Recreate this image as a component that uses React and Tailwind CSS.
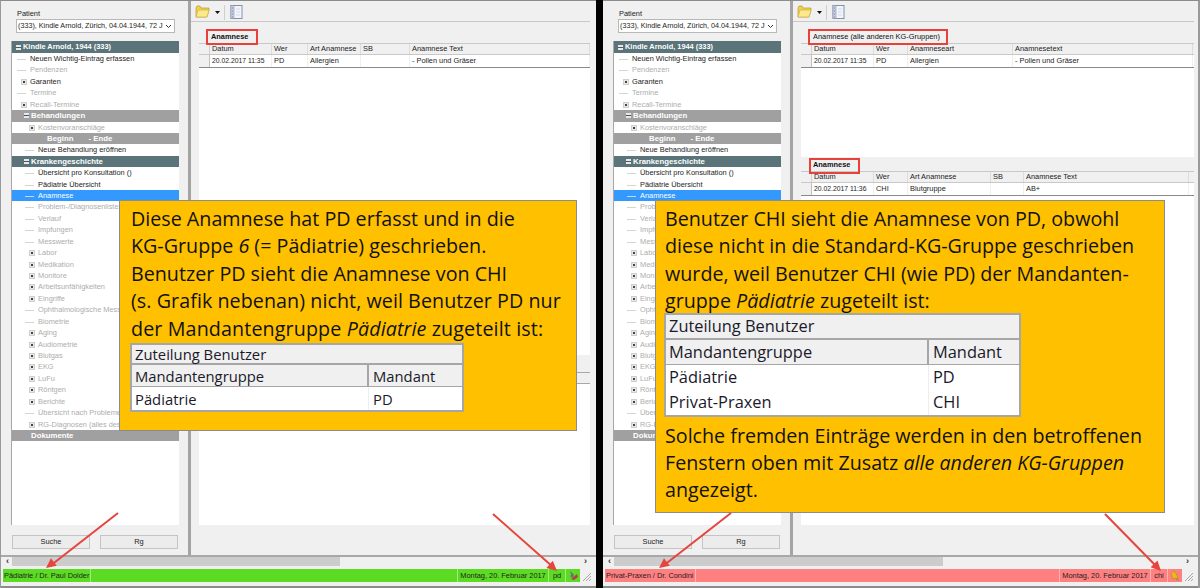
import React from "react";

const treeRows = [
  { label: "Neuen Wichtig-Eintrag erfassen", level: 1 },
  { label: "Pendenzen", level: 1, off: true },
  { label: "Garanten", level: 1, plus: true },
  { label: "Termine", level: 1, off: true },
  { label: "Recall-Termine", level: 1, plus: true, off: true },
  { label: "Behandlungen", head: "gray", box: true },
  { label: "Kostenvoranschläge", level: 2, plus: true, off: true },
  { label: "Beginn       - Ende", head: "gray", sub: true },
  { label: "Neue Behandlung eröffnen", level: 2 },
  { label: "Krankengeschichte", head: "teal", box: true },
  { label: "Übersicht pro Konsultation ()", level: 2 },
  { label: "Pädiatrie Übersicht", level: 2 },
  { label: "Anamnese", level: 2, active: true },
  { label: "Problem-/Diagnosenliste", level: 2, off: true },
  { label: "Verlauf", level: 2, off: true },
  { label: "Impfungen", level: 2, off: true },
  { label: "Messwerte", level: 2, off: true },
  { label: "Labor", level: 2, plus: true, off: true },
  { label: "Medikation", level: 2, plus: true, off: true },
  { label: "Monitore", level: 2, plus: true, off: true },
  { label: "Arbeitsunfähigkeiten", level: 2, plus: true, off: true },
  { label: "Eingriffe", level: 2, plus: true, off: true },
  { label: "Ophthalmologische Messungen", level: 2, off: true },
  { label: "Biometrie", level: 2, off: true },
  { label: "Aging", level: 2, plus: true, off: true },
  { label: "Audiometrie", level: 2, plus: true, off: true },
  { label: "Blutgas", level: 2, plus: true, off: true },
  { label: "EKG", level: 2, plus: true, off: true },
  { label: "LuFu", level: 2, plus: true, off: true },
  { label: "Röntgen", level: 2, plus: true, off: true },
  { label: "Berichte", level: 2, plus: true, off: true },
  { label: "Übersicht nach Problemen", level: 2, off: true },
  { label: "RG-Diagnosen (alles des Patienten)", level: 2, plus: true, off: true },
];

const PlusBox = () => (
  <span className="w-[6px] h-[6px] bg-[#e8e8e8] border border-[#cfcfcf] flex items-center justify-center shrink-0">
    <span className="w-[2px] h-[2px] bg-[#444]" />
  </span>
);

const TreeRow = ({ row }) => {
  if (row.head) {
    return (
      <div
        className={`h-[11.43px] flex items-center text-white font-bold text-[7.8px] whitespace-pre ${
          row.head === "teal" ? "bg-[#5a7479]" : "bg-[#a0a0a0]"
        } ${row.sub ? "pl-[35px]" : "pl-[12px]"}`}
      >
        {row.box && (
          <span className="w-[5px] h-[5px] bg-[#e8e8e8] mr-[2px] flex items-center">
            <span className="w-full h-[1px] bg-[#555]" />
          </span>
        )}
        {row.label}
      </div>
    );
  }
  const textLeft = row.level === 1 ? "pl-[18px]" : "pl-[26px]";
  return (
    <div
      className={`h-[11.43px] flex items-center relative whitespace-nowrap overflow-hidden ${textLeft} ${
        row.active ? "bg-[#3399ff] text-white" : row.off ? "text-[#adadad]" : "text-[#1c1c1c]"
      }`}
    >
      {row.plus ? (
        <span className={`absolute top-[3px] ${row.level === 1 ? "left-[9px]" : "left-[17px]"}`}>
          <PlusBox />
        </span>
      ) : (
        <span
          className={`absolute top-[6px] h-[1px] bg-[#d4d4d4] ${
            row.level === 1 ? "left-[5px] w-[9px]" : "left-[13px] w-[9px]"
          }`}
        />
      )}
      {row.label}
    </div>
  );
};

const GridTitle = ({ title, bold }) => (
  <div className={`h-[12px] bg-[#f0f0f0] flex items-center pl-[12px] text-[#111] ${bold ? "font-bold" : ""}`}>
    {title}
  </div>
);

const Grid = ({ cols, rows }) => (
  <div className="border-b border-[#8a8a8a]">
    <div className="flex h-[12px] bg-[#f0f0f0] border-y border-[#c8c8c8]">
      <div className="w-[11px] border-r border-[#d0d0d0]" />
      {cols.map((c) => (
        <div
          key={c.label}
          style={{ width: c.w }}
          className="flex items-center pl-[2px] text-[#222] border-r border-[#dcdcdc] whitespace-nowrap"
        >
          {c.label}
        </div>
      ))}
    </div>
    {rows.map((r) => (
      <div key={r[0]} className="flex h-[12px]">
        <div className="w-[11px] bg-[#f0f0f0] border-r border-[#c0c0c0]" />
        {cols.map((c, i) => (
          <div
            key={c.label}
            style={{ width: c.w }}
            className={`flex items-center pl-[2px] text-[#222] border-r border-[#f0f0f0] whitespace-nowrap ${
              i === 0 ? "text-[6.8px]" : ""
            }`}
          >
            {r[i]}
          </div>
        ))}
      </div>
    ))}
  </div>
);

const FolderIcon = () => (
  <svg width="15" height="13" viewBox="0 0 15 13" className="shrink-0">
    <path d="M1 3 L1 12 L12 12 L14 5 L14 3 L6 3 L5 1 L2 1 Z" fill="#f2cf4e" stroke="#b99a35" strokeWidth="0.7" />
    <path d="M1 12 L3 5 L14 5 L12 12 Z" fill="#fbe98c" stroke="#c9ab3e" strokeWidth="0.6" />
  </svg>
);

const NotebookIcon = () => (
  <svg width="13" height="14" viewBox="0 0 13 14" className="shrink-0">
    <rect x="1" y="0.5" width="11" height="13" fill="#f2f6fc" stroke="#7f93ad" />
    <rect x="1" y="0.5" width="3" height="13" fill="#c7d5ea" stroke="#7f93ad" strokeWidth="0.6" />
    <path d="M2 3 H3 M2 6 H3 M2 9 H3 M2 12 H3" stroke="#d2635a" strokeWidth="1" />
    <path d="M6 4 H10 M6 7 H10 M6 10 H10" stroke="#c4d0e0" strokeWidth="0.7" />
  </svg>
);

const Bell = () => (
  <svg width="10" height="11" viewBox="0 0 10 11">
    <path d="M3 1 L6 3 L8 8 L3 9 L1 4 Z" fill="#e8b91e" stroke="#a47f10" strokeWidth="0.5" />
    <circle cx="7.5" cy="9.5" r="1.2" fill="#b8901a" />
  </svg>
);

const Tool = () => (
  <svg width="11" height="11" viewBox="0 0 11 11">
    <path d="M2 1 L6 5 L4 7 Z" fill="#7a5a8a" />
    <path d="M3 9 L9 4 L10 7 L6 10 Z" fill="#b0405a" />
    <circle cx="4" cy="6" r="1.5" fill="#6f6f6f" />
  </svg>
);

const Grip = () => (
  <svg width="12" height="13" viewBox="0 0 12 13" className="bg-[#f0f0f0] shrink-0">
    <path d="M11 4 L3 12 M11 7 L6 12 M11 10 L9 12" stroke="#a8a8a8" strokeWidth="1" />
  </svg>
);

const AppWindow = ({ frameClass, mainClass, thumbClass, status, statusBg, sep, user, icon, children }) => (
  <div className={`h-[588px] shrink-0 bg-[#f0f0f0] flex flex-col border-t border-[#8c8c8c] text-[7.4px] leading-none ${frameClass}`}>
    <div className="flex h-[554px]">
      {/* sidebar */}
      <div className="w-[187px] shrink-0 flex flex-col pl-[10px] pr-[9px]">
        <div className="h-[40px] pt-[11px] relative">
          <span className="absolute left-[6px] top-[9px] text-[#222]">Patient</span>
          <div className="mt-[7px] ml-[5px] mr-[4px] h-[14px] bg-white border border-[#b8b8b8] flex items-center justify-between pl-[1px] text-[7.2px] text-[#222] whitespace-nowrap overflow-hidden">
            <span>(333), Kindle Arnold, Zürich, 04.04.1944, 72 J</span>
            <svg width="7" height="5" viewBox="0 0 7 5" className="mr-[2px] shrink-0">
              <path d="M1 1 L3.5 3.5 L6 1" fill="none" stroke="#333" />
            </svg>
          </div>
        </div>
        <div className="h-[484px] bg-white border-l border-[#a8a8a8]">
          <div className="h-[12px] bg-[#5a7479] text-white font-bold flex items-center pl-[4px]">
            <span className="w-[5px] h-[5px] bg-[#e8e8e8] mr-[2px] flex items-center">
              <span className="w-full h-[1px] bg-[#555]" />
            </span>
            Kindle Arnold, 1944 (333)
          </div>
          {treeRows.map((row) => (
            <TreeRow key={row.label} row={row} />
          ))}
          <div className="h-[11.43px] bg-[#a0a0a0] text-white font-bold text-[7.8px] flex items-center pl-[19px]">Dokumente</div>
        </div>
        <div className="flex gap-[10px] mt-[10px] pl-[1px]">
          <button className="w-[78px] h-[14px] bg-[#ececec] border border-[#c4c4c4] text-[#222] text-[7.4px]">Suche</button>
          <button className="w-[78px] h-[14px] bg-[#ececec] border border-[#c4c4c4] text-[#222] text-[7.4px]">Rg</button>
        </div>
      </div>
      <div className="w-[3px] shrink-0 bg-[#a4a4a4]" />
      {/* main */}
      <div className={`flex-1 flex flex-col min-w-0 ${mainClass}`}>
        <div className="h-[21px] shrink-0 border-b border-[#c8c8c8] flex items-start pt-[4px] pl-[4px]">
          <FolderIcon />
          <svg width="5" height="3" viewBox="0 0 5 3" className="mt-[6px] ml-[5px] shrink-0">
            <path d="M0 0 H5 L2.5 3 Z" fill="#111" />
          </svg>
          <div className="w-[1px] h-[15px] bg-[#cfcfcf] ml-[4px] mr-[5px] shrink-0" />
          <NotebookIcon />
        </div>
        <div className="h-[9px] shrink-0" />
        <div className="h-[494px] ml-[8px] bg-white flex flex-col">{children}</div>
      </div>
    </div>
    <div className="h-[14px] border-t-2 border-[#a8a8a8] pl-[2px] pr-[6px] flex items-start bg-[#f0f0f0] text-[#333]">
      <span className="w-[9px] h-[9px] flex items-center justify-center font-bold text-[9px]">‹</span>
      <div className={`h-[9px] bg-[#cccccc] ${thumbClass}`} />
      <div className="flex-1" />
      <span className="w-[9px] h-[9px] flex items-center justify-center font-bold text-[9px]">›</span>
    </div>
    <div className={`h-[13px] ml-[2px] mr-[4px] flex items-center text-[#222] ${statusBg}`}>
      <div className={`h-full flex items-center pl-[1px] pr-[1px] border-r ${sep} whitespace-nowrap`}>{status}</div>
      <div className="flex-1" />
      <div className={`h-full w-[92px] flex items-center justify-center border-x ${sep} whitespace-nowrap`}>
        Montag, 20. Februar 2017
      </div>
      <div className={`h-full w-[17px] flex items-center justify-center border-r ${sep}`}>{user}</div>
      <div className="w-[14px] flex items-center justify-center">{icon}</div>
      <Grip />
    </div>
    <div className="flex-1" />
    <div className="h-[2px] bg-[#8c8c8c]" />
  </div>
);

const Callout = ({ className, children }) => (
  <div className={`absolute bg-[#ffc000] border border-[#8b8b8b] font-['Open_Sans',sans-serif] text-[19.7px] leading-[27.4px] text-[#111] ${className}`}>
    {children}
  </div>
);

const UserTable = ({ className, splitClass, titleClass, headClass, rowClass, rows }) => (
  <div className={`-ml-px border-2 border-[#a6a6a6] text-[#1a1a2a] bg-white ${className}`}>
    <div className={`bg-[#f0f0f0] border-b-2 border-[#a6a6a6] pl-[3px] flex items-center ${titleClass}`}>Zuteilung Benutzer</div>
    <div className={`bg-[#f0f0f0] border-b border-[#a6a6a6] flex ${headClass}`}>
      <div className={`${splitClass} pl-[3px] border-r-2 border-[#a6a6a6] flex items-center`}>Mandantengruppe</div>
      <div className="pl-[4px] flex items-center">Mandant</div>
    </div>
    {rows.map((r) => (
      <div key={r[0]} className={`flex ${rowClass}`}>
        <div className={`${splitClass} pl-[3px] border-r border-[#eeeeee] flex items-center`}>{r[0]}</div>
        <div className="pl-[4px] flex items-center">{r[1]}</div>
      </div>
    ))}
  </div>
);

const RedBox = ({ className }) => <div className={`absolute border-2 border-[#e8403a] ${className}`} />;

const Arrows = () => (
  <svg className="absolute inset-0 pointer-events-none" width="1200" height="588" viewBox="0 0 1200 588">
    {[
      [118, 513, 50, 566, 46, 568],
      [493, 514, 553, 567, 557, 571],
      [731, 513, 663, 566, 659, 568],
      [1105, 514, 1157, 567, 1161, 571],
    ].map(([x1, y1, x2, y2, tx, ty]) => {
      const ang = Math.atan2(ty - y1, tx - x1);
      const p = (a, l) => `${tx - l * Math.cos(ang + a)},${ty - l * Math.sin(ang + a)}`;
      return (
        <g key={x1}>
          <line x1={x1} y1={y1} x2={x2} y2={y2} stroke="#e5453d" strokeWidth="2" />
          <polygon points={`${tx},${ty} ${p(0.45, 11)} ${p(-0.45, 11)}`} fill="#e5453d" />
        </g>
      );
    })}
  </svg>
);

const leftCols = [
  { label: "Datum", w: 62 },
  { label: "Wer", w: 36 },
  { label: "Art Anamnese", w: 53 },
  { label: "SB", w: 49 },
  { label: "Anamnese Text", w: 180 },
];
const upperCols = [
  { label: "Datum", w: 62 },
  { label: "Wer", w: 34 },
  { label: "Anamneseart", w: 105 },
  { label: "Anamnesetext", w: 180 },
];
const lowerCols = [
  { label: "Datum", w: 62 },
  { label: "Wer", w: 34 },
  { label: "Art Anamnese", w: 83 },
  { label: "SB", w: 33 },
  { label: "Anamnese Text", w: 165 },
];

export default function App() {
  return (
    <div className="relative w-[1200px] h-[588px] overflow-hidden flex bg-black font-['Liberation_Sans',sans-serif]">
      <AppWindow
        frameClass="w-[596px] border-l border-l-[#9a9a9a]"
        mainClass="pr-[6px]"
        thumbClass="w-[328px]"
        status="Pädiatrie / Dr. Paul Dolder"
        statusBg="bg-[#5bdb22]"
        sep="border-[#a5e88a]"
        user="pd"
        icon={<Tool />}
      >
        <GridTitle title="Anamnese" bold />
        <Grid cols={leftCols} rows={[["20.02.2017 11:35", "PD", "Allergien", "", "- Pollen und Gräser"]]} />
        <div className="h-[287px] shrink-0" />
        <div className="h-[17px] bg-[#f0f0f0] shrink-0" />
        <div className="h-[12px] bg-[#f0f0f0] border-y border-[#a8a8a8] shrink-0" />
      </AppWindow>
      <div className="w-[7px] shrink-0 bg-black" />
      <AppWindow
        frameClass="w-[597px] border-r-2 border-r-[#9a9a9a]"
        mainClass="pr-[4px]"
        thumbClass="w-[329px]"
        status="Privat-Praxen / Dr. Condini"
        statusBg="bg-[#ff8080]"
        sep="border-[#ffb0b0]"
        user="chi"
        icon={<Bell />}
      >
        <GridTitle title="Anamnese (alle anderen KG-Gruppen)" />
        <Grid cols={upperCols} rows={[["20.02.2017 11:35", "PD", "Allergien", "- Pollen und Gräser"]]} />
        <div className="h-[89px] shrink-0" />
        <div className="h-[2px] bg-[#f0f0f0] shrink-0" />
        <GridTitle title="Anamnese" bold />
        <Grid cols={lowerCols} rows={[["20.02.2017 11:36", "CHI", "Blutgruppe", "", "AB+"]]} />
      </AppWindow>

      <RedBox className="left-[206px] top-[29px] w-[52px] h-[16px]" />
      <RedBox className="left-[808px] top-[29px] w-[140px] h-[16px]" />
      <RedBox className="left-[809px] top-[158px] w-[51px] h-[16px]" />

      <Callout className="left-[119px] top-[200px] w-[458px] h-[231px] pl-[11px] pt-[4px]">
        <p>Diese Anamnese hat PD erfasst und in die</p>
        <p>KG-Gruppe <i>6</i> (= Pädiatrie) geschrieben.</p>
        <p>Benutzer PD sieht die Anamnese von CHI</p>
        <p className="tracking-[0.06px]">(s. Grafik nebenan) nicht, weil Benutzer PD nur</p>
        <p className="tracking-[0.12px]">der Mandantengruppe <i>Pädiatrie</i> zugeteilt ist:</p>
        <UserTable
          className="w-[334px] mt-[1px] text-[14.8px] leading-[20px]"
          splitClass="w-[237px]"
          titleClass="h-[20px]"
          headClass="h-[22px]"
          rowClass="h-[23px]"
          rows={[["Pädiatrie", "PD"]]}
        />
      </Callout>

      <Callout className="left-[655px] top-[200px] w-[510px] h-[313px] pl-[9px] pt-[4px]">
        <p>Benutzer CHI sieht die Anamnese von PD, obwohl</p>
        <p>diese nicht in die Standard-KG-Gruppe geschrieben</p>
        <p>wurde, weil Benutzer CHI (wie PD) der Mandanten-</p>
        <p>gruppe <i>Pädiatrie</i> zugeteilt ist:</p>
        <UserTable
          className="w-[357px] -mt-[2px] text-[16.4px] leading-[22px]"
          splitClass="w-[263px]"
          titleClass="h-[25px]"
          headClass="h-[25px]"
          rowClass="h-[25px]"
          rows={[
            ["Pädiatrie", "PD"],
            ["Privat-Praxen", "CHI"],
          ]}
        />
        <p className="mt-[5px]">Solche fremden Einträge werden in den betroffenen</p>
        <p>Fenstern oben mit Zusatz <i>alle anderen KG-Gruppen</i></p>
        <p>angezeigt.</p>
      </Callout>

      <Arrows />
    </div>
  );
}
